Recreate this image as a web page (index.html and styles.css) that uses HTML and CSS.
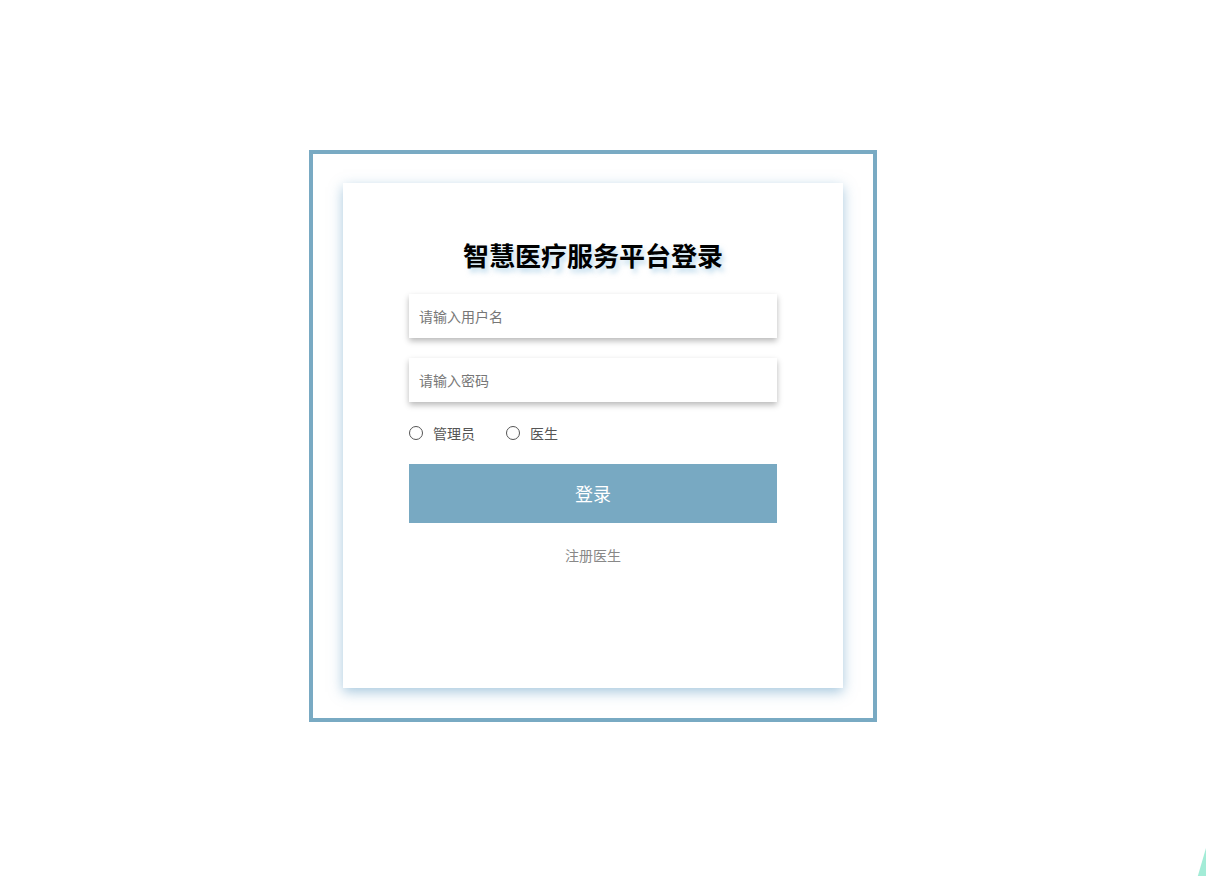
FILE: index.html
```html
<!DOCTYPE html>
<html lang="zh">
<head>
<meta charset="utf-8">
<title>智慧医疗服务平台登录</title>
<link rel="stylesheet" href="styles.css">
</head>
<body>
<div class="frame">
  <div class="card">
    <h2 class="title">智慧医疗服务平台登录</h2>
    <form class="form">
      <input class="field" type="text" placeholder="请输入用户名">
      <input class="field" type="password" placeholder="请输入密码">
      <div class="roles">
        <label class="role"><span class="radio"></span>管理员</label>
        <label class="role"><span class="radio"></span>医生</label>
      </div>
      <button class="submit" type="button">登录</button>
      <a class="register" href="#">注册医生</a>
    </form>
  </div>
</div>
<div class="corner"></div>
</body>
</html>
```

FILE: styles.css
```css
html, body {
  margin: 0;
  padding: 0;
  background: #ffffff;
  font-family: "Microsoft YaHei", "Noto Sans CJK SC", "Noto Sans", sans-serif;
  overflow: hidden;
  height: 876px;
}
.frame {
  box-sizing: border-box;
  width: 568px;
  height: 572px;
  margin: 150px 0 0 309px;
  border: 4px solid #79aac3;
  padding: 29px 30px;
}
.card {
  box-sizing: border-box;
  width: 500px;
  height: 505px;
  background: #fff;
  box-shadow: 0 4px 12px rgba(80, 145, 190, 0.5);
  padding-top: 53px;
}
.title {
  margin: 0;
  text-align: center;
  font-size: 26px;
  line-height: 38px;
  font-weight: 700;
  color: #000;
  text-shadow: 3px 4px 5px rgba(130, 185, 220, 0.5);
}
.form {
  display: flex;
  flex-direction: column;
  width: 368px;
  margin: 20px auto 0;
}
.field {
  box-sizing: border-box;
  height: 44px;
  border: none;
  outline: none;
  padding: 0 10px;
  font-family: inherit;
  font-size: 14px;
  color: #333;
  background: #fff;
  box-shadow: 0 3px 6px rgba(0, 0, 0, 0.28);
  margin-bottom: 20px;
}
.field::placeholder {
  color: #777;
}
.roles {
  display: flex;
  gap: 31px;
  font-size: 14px;
  color: #555;
  margin-top: 1px;
  height: 20px;
  align-items: center;
}
.role {
  display: flex;
  align-items: center;
  gap: 10px;
}
.radio {
  box-sizing: border-box;
  width: 14px;
  height: 14px;
  border: 1px solid #555;
  border-radius: 50%;
}
.submit {
  margin-top: 21px;
  height: 59px;
  border: none;
  background: #78a9c2;
  color: #fff;
  font-family: inherit;
  font-size: 18px;
  padding: 0 0 2px;
}
.register {
  margin-top: 22px;
  text-align: center;
  font-size: 14px;
  color: #888;
  text-decoration: none;
  line-height: 20px;
}
.corner {
  position: absolute;
  right: -20px;
  bottom: -20px;
  width: 0;
  height: 0;
  border-left: 14px solid transparent;
  border-bottom: 48px solid #a3ecd7;
  border-right: 20px solid #a3ecd7;
}
```
